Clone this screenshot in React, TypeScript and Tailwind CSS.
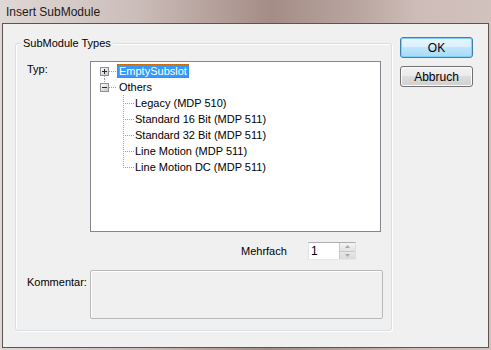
import React from 'react';

const font = { fontFamily: '"Liberation Sans", Arial, sans-serif' };

function Dots({ x1, y1, x2, y2 }: { x1: number; y1: number; x2: number; y2: number }) {
  return (
    <line
      x1={x1}
      y1={y1}
      x2={x2}
      y2={y2}
      stroke="#a0a0a0"
      strokeWidth={1}
      strokeDasharray="1 1"
      shapeRendering="crispEdges"
    />
  );
}

function Expander({ open }: { open: boolean }) {
  return (
    <g shapeRendering="crispEdges">
      <defs>
        <linearGradient id="exp" x1="0" y1="0" x2="1" y2="1">
          <stop offset="0" stopColor="#ffffff" />
          <stop offset="1" stopColor="#c6c6c6" />
        </linearGradient>
      </defs>
      <rect x={9.5} y={4.5} width={8} height={8} fill="url(#exp)" stroke="#8f8f8f" />
      <line x1={11} y1={8.5} x2={16} y2={8.5} stroke="#1b2b44" />
      {!open && <line x1={13.5} y1={6} x2={13.5} y2={11} stroke="#1b2b44" />}
    </g>
  );
}

function RootRow({ label, open, selected, first }: { label: string; open: boolean; selected?: boolean; first?: boolean }) {
  return (
    <div className="flex h-[16px] items-center">
      <svg width={26} height={16} className="shrink-0">
        {first ? <Dots x1={13.5} y1={13} x2={13.5} y2={16} /> : <Dots x1={13.5} y1={0} x2={13.5} y2={4} />}
        <Dots x1={18} y1={8.5} x2={25} y2={8.5} />
        <Expander open={open} />
      </svg>
      <span
        className={
          selected
            ? 'h-[14px] border border-dotted border-[#cc6600] bg-[#3399ff] px-[1px] leading-[12px] text-white'
            : 'px-[2px] leading-[14px] text-black'
        }
      >
        {label}
      </span>
    </div>
  );
}

function ChildRow({ label, last }: { label: string; last?: boolean }) {
  return (
    <div className="flex h-[16px] items-center">
      <svg width={44} height={16} className="shrink-0">
        <Dots x1={32.5} y1={0} x2={32.5} y2={last ? 9 : 16} />
        <Dots x1={34} y1={8.5} x2={43} y2={8.5} />
      </svg>
      <span className="leading-[14px] text-black">{label}</span>
    </div>
  );
}

function SpinBox() {
  return (
    <div className="flex h-[18px] w-[48px] border border-[#abadb3] border-r-[#dbdfe6] border-b-[#e3e9ef] border-l-[#e2e3ea] bg-white">
      <div className="flex-1 pl-[2px] text-[12px] leading-[16px] text-black">1</div>
      <div className="flex w-[16px] flex-col border-l border-[#c9c9c9]">
        <div className="flex flex-1 items-center justify-center border-b border-[#c9c9c9] bg-gradient-to-b from-[#f3f3f3] to-[#e3e3e3]">
          <svg width={5} height={3}>
            <path d="M2.5 0 L5 3 L0 3 Z" fill="#a8a8a8" />
          </svg>
        </div>
        <div className="flex flex-1 items-center justify-center bg-gradient-to-b from-[#e8e8e8] to-[#dadada]">
          <svg width={5} height={3}>
            <path d="M0 0 L5 0 L2.5 3 Z" fill="#a8a8a8" />
          </svg>
        </div>
      </div>
    </div>
  );
}

export default function App() {
  return (
    <div
      className="flex h-[350px] w-[491px] flex-col bg-[linear-gradient(90deg,#e0d8d6_0%,#cbbdb9_28%,#a58c86_55%,#b8a49f_72%,#cdbcb7_85%,#d2c2bd_100%)] text-[11px]"
      style={font}
    >
      <div className="flex h-[23px] shrink-0 items-center pl-[6px] pt-[1px] text-[12px] text-[#1c1a1a]">
        Insert SubModule
      </div>
      <div className="mx-[2px] mb-[2px] flex flex-1 border border-[#5d5452] bg-[#f0f0f0] pl-[12px] pt-[13px]">
        {/* group box */}
        <div className="relative mt-[6px] h-[288px] w-[377px] rounded-[3px] border border-[#d5dfe5] shadow-[inset_1px_1px_0_#ffffff,1px_1px_0_#ffffff]">
          <span className="absolute left-[5px] top-[-8px] bg-[#f0f0f0] px-[2px] leading-[14px] text-black">
            SubModule Types
          </span>
          <div className="flex pt-[17px]">
            <div className="w-[74px] shrink-0 pl-[11px] pt-[1px] leading-[14px] text-black">Typ:</div>
            <div className="h-[171px] w-[291px] border border-[#828790] bg-white pt-[1px]">
              <RootRow label="EmptySubslot" open={false} selected first />
              <RootRow label="Others" open />
              <ChildRow label="Legacy (MDP 510)" />
              <ChildRow label="Standard 16 Bit (MDP 511)" />
              <ChildRow label="Standard 32 Bit (MDP 511)" />
              <ChildRow label="Line Motion (MDP 511)" />
              <ChildRow label="Line Motion DC (MDP 511)" last />
            </div>
          </div>
          <div className="mt-[10px] flex items-center pl-[225px]">
            <span className="w-[67px] leading-[14px] text-black">Mehrfach</span>
            <SpinBox />
          </div>
          <div className="mt-[10px] flex">
            <div className="w-[74px] shrink-0 pl-[11px] pt-[5px] leading-[14px] text-black">Kommentar:</div>
            <div className="h-[49px] w-[293px] rounded-[2px] border border-[#b8b8b8] bg-[#f0f0f0] shadow-[inset_1px_1px_0_#ffffff]" />
          </div>
        </div>
        {/* buttons */}
        <div className="ml-[8px] flex flex-col gap-[8px]">
          <button className="flex h-[21px] w-[73px] items-center justify-center rounded-[3px] border border-[#3c7fb1] bg-[linear-gradient(180deg,#eaf6fd_0%,#d9f0fc_45%,#bee6fd_50%,#a7d9f5_100%)] text-[12px] text-black shadow-[inset_0_0_0_1px_#7fd2f5]">
            OK
          </button>
          <button className="flex h-[21px] w-[73px] items-center justify-center rounded-[3px] border border-[#707070] bg-[linear-gradient(180deg,#f2f2f2_0%,#ebebeb_45%,#dddddd_50%,#cfcfcf_100%)] text-[12px] text-black shadow-[inset_0_0_0_1px_#fcfcfc]">
            Abbruch
          </button>
        </div>
      </div>
    </div>
  );
}
